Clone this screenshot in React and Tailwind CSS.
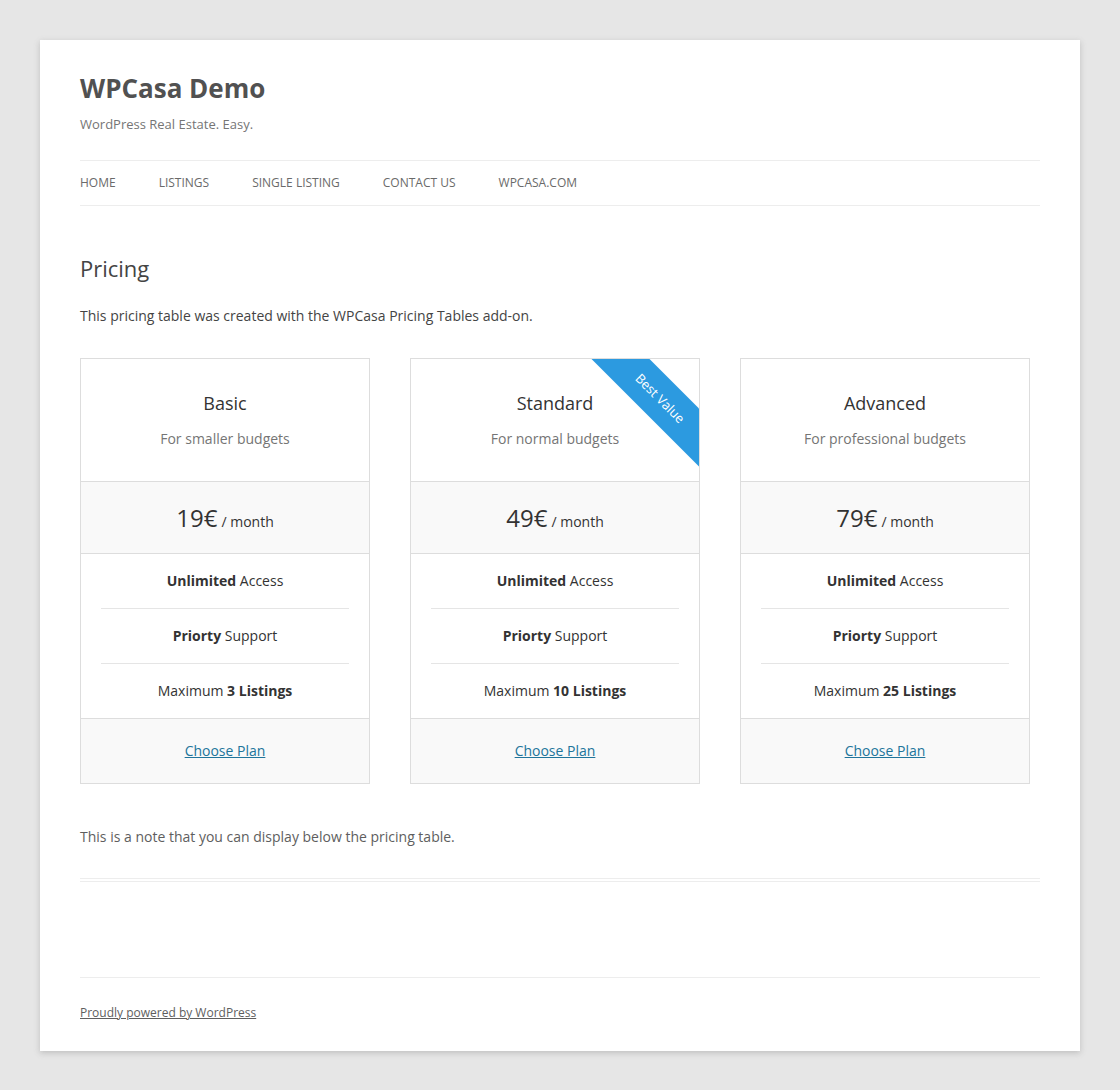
import React from "react";

const plans = [
  { name: "Basic", sub: "For smaller budgets", price: "19€", max: "3 Listings" },
  { name: "Standard", sub: "For normal budgets", price: "49€", max: "10 Listings", ribbon: true },
  { name: "Advanced", sub: "For professional budgets", price: "79€", max: "25 Listings" },
];

const font = { fontFamily: '"Open Sans", "Noto Sans", sans-serif' };

function Card({ p }) {
  return (
    <div className="relative overflow-hidden border border-[#dddddd] bg-white text-center">
      {p.ribbon && (
        <div className="absolute top-[19px] right-[-41px] flex h-[41px] w-[160px] rotate-45 items-center justify-center bg-[#2c9ae0] text-[13px] text-white">
          Best Value
        </div>
      )}
      <div className="border-b border-[#dddddd] pt-[31px] pb-[30px]">
        <div className="text-[18px] leading-[27px] text-[#333]">{p.name}</div>
        <div className="mt-[10px] text-[14px] leading-[24px] text-[#757575]">{p.sub}</div>
      </div>
      <div className="flex h-[72px] items-baseline justify-center border-b border-[#dddddd] bg-[#f9f9f9] pt-[20px] text-[#333]">
        <span className="text-[24px] leading-[32px]">{p.price}</span>
        <span className="ml-[4px] text-[14px]">/ month</span>
      </div>
      <div className="border-b border-[#dddddd] text-[14px] text-[#333]">
        <div className="flex h-[54px] items-center justify-center pb-[2px]">
          <span><b className="font-bold">Unlimited</b> Access</span>
        </div>
        <div className="mx-5 border-t border-[#e5e5e5]" />
        <div className="flex h-[54px] items-center justify-center pb-[2px]">
          <span><b className="font-bold">Priorty</b> Support</span>
        </div>
        <div className="mx-5 border-t border-[#e5e5e5]" />
        <div className="flex h-[54px] items-center justify-center pb-[2px]">
          <span>Maximum <b className="font-bold">{p.max}</b></span>
        </div>
      </div>
      <div className="flex h-[64px] items-center justify-center bg-[#f9f9f9] pb-[2px]">
        <a href="#" className="text-[14px] text-[#21759b] underline">Choose Plan</a>
      </div>
    </div>
  );
}

export default function App() {
  return (
    <div className="min-h-[1090px] bg-[#e6e6e6] pt-[40px] pb-[40px]" style={font}>
      <div className="mx-[40px] bg-white px-[40px] pt-[24px] pb-[26px] shadow-[0_2px_6px_rgba(100,100,100,0.3)]">
        <header>
          <h1 className="text-[26px] font-bold leading-[48px] text-[#515151]">WPCasa Demo</h1>
          <div className="text-[13px] leading-[24px] text-[#757575]">WordPress Real Estate. Easy.</div>
          <nav className="mt-[24px] flex h-[46px] items-center gap-[43px] border-y border-[#ededed] text-[12px] uppercase text-[#6a6a6a]">
            <a href="#">Home</a>
            <a href="#">Listings</a>
            <a href="#">Single Listing</a>
            <a href="#">Contact Us</a>
            <a href="#">wpcasa.com</a>
          </nav>
        </header>
        <main>
          <h2 className="mt-[46px] text-[22px] leading-[33px] text-[#444]">Pricing</h2>
          <p className="mt-[19px] text-[14px] leading-[24px] text-[#444]">
            This pricing table was created with the WPCasa Pricing Tables add-on.
          </p>
          <div className="mt-[30px] grid w-[950px] grid-cols-3 gap-[40px]">
            {plans.map((p) => (
              <Card key={p.name} p={p} />
            ))}
          </div>
          <p className="mt-[41px] text-[14px] leading-[24px] text-[#5e5e5e]">
            This is a note that you can display below the pricing table.
          </p>
          <div className="mt-[29px] border-t border-[#ededed]" />
          <div className="mt-[2px] border-t border-[#ededed]" />
        </main>
        <footer className="mt-[95px] border-t border-[#ededed] pt-[21px]">
          <a href="#" className="text-[12px] leading-[24px] text-[#5e5e5e] underline">Proudly powered by WordPress</a>
        </footer>
      </div>
    </div>
  );
}
